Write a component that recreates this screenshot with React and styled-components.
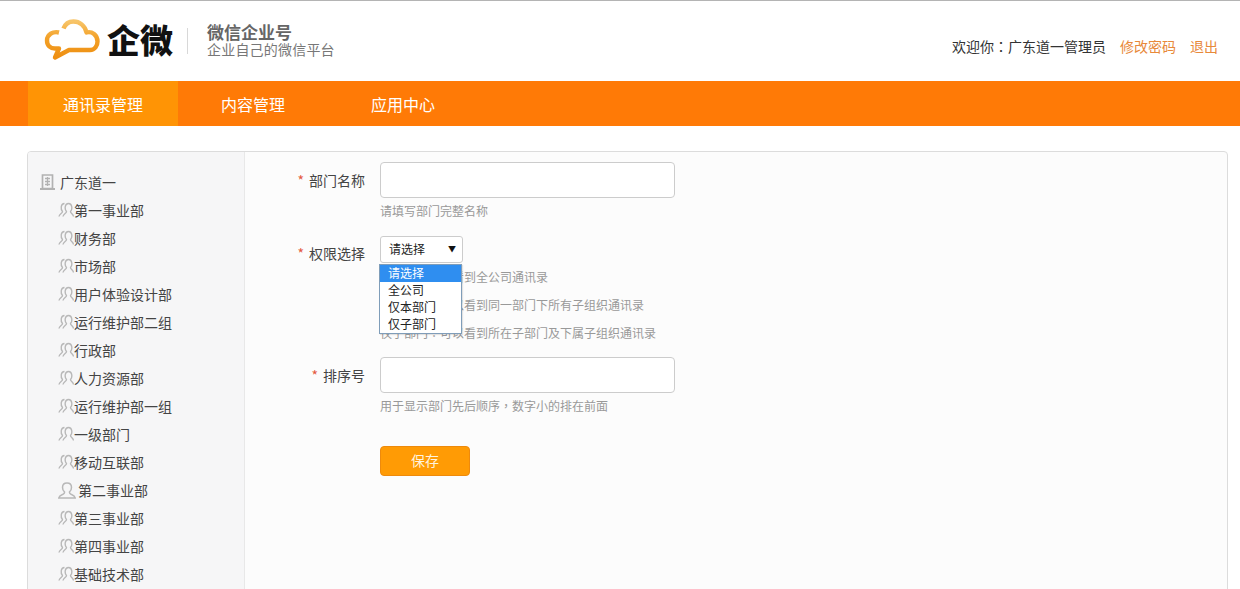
import React from "react";
import styled, { createGlobalStyle } from "styled-components";

const fontStack = `"Noto Sans CJK SC", "Liberation Sans", sans-serif`;

const GlobalStyle = createGlobalStyle`
    html, body {
        margin: 0;
        height: 589px;
        overflow: hidden;
        background: #fff;
        font-family: ${fontStack};
    }
`;

const Header = styled.header`
    height: 80px;
    border-top: 1px solid #b4b4b4;
    display: flex;
    align-items: center;
    justify-content: space-between;
    padding: 0 22px 0 44px;
`;

const Brand = styled.div`
    display: flex;
    align-items: center;
    margin-top: -4px;
`;

const LogoWord = styled.div`
    font-size: 33px;
    font-weight: 900;
    line-height: 40px;
    color: #111;
    margin-left: 7px;
    width: 80px;
`;

const BrandDivider = styled.div`
    width: 1px;
    height: 26px;
    background: #d8d8d8;
    margin: 4px 19px 0 0;
`;

const BrandText = styled.div`
    display: flex;
    flex-direction: column;
    color: #777;
    margin-top: 2px;
`;

const BrandTitle = styled.div`
    font-size: 17px;
    font-weight: 700;
    line-height: 18px;
    color: #666;
`;

const BrandSub = styled.div`
    font-size: 14px;
    line-height: 15px;
    letter-spacing: 0.2px;
    margin-top: 1px;
`;

const UserBar = styled.div`
    display: flex;
    align-items: center;
    gap: 14px;
    font-size: 14px;
    line-height: 20px;
    color: #333;
    margin-top: 10px;
`;

const UserLink = styled.a`
    color: #e8893a;
`;

// traditional-Chinese glyphs centre the full-width colon and comma, as the original does
const Punct = styled.span`
    font-family: "Noto Sans CJK TC", sans-serif;
`;

const Nav = styled.nav`
    height: 45px;
    background: #ff7a06;
    padding-left: 28px;
    display: flex;
`;

const NavItem = styled.a`
    width: 150px;
    display: flex;
    align-items: center;
    justify-content: center;
    font-size: 16px;
    color: #fff;
    background: ${(props) => (props.$active ? "#ff9405" : "transparent")};
`;

const Panel = styled.div`
    margin: 25px 12px 0 27px;
    height: 600px;
    border: 1px solid #dcdcdc;
    border-radius: 4px;
    display: flex;
    overflow: hidden;
    background: #fcfcfc;
`;

const Sidebar = styled.aside`
    width: 216px;
    flex-shrink: 0;
    background: #f6f6f7;
    border-right: 1px solid #e8e8e8;
    padding-top: 16px;
`;

const TreeRow = styled.div`
    height: 28px;
    display: flex;
    align-items: center;
    padding-left: ${(props) => (props.$root ? "12px" : "30px")};
    font-size: 14px;
    color: #444;
`;

const RootLabel = styled.span`
    margin-left: 5px;
`;

const WideLabel = styled.span`
    margin-left: 2px;
`;

const Form = styled.main`
    flex: 1;
    padding-top: 10px;
`;

const Field = styled.div`
    display: flex;
    margin-bottom: ${(props) => props.$gap}px;
`;

const Label = styled.label`
    width: 120px;
    margin-right: 15px;
    text-align: right;
    font-size: 14px;
    line-height: 36px;
    color: #444;
`;

const SelectLabel = styled(Label)`
    line-height: 34px;
`;

const Star = styled.span`
    color: #e4593d;
    margin-right: 5px;
`;

const Control = styled.div`
    position: relative;
    width: 600px;
`;

const TextInput = styled.input`
    display: block;
    box-sizing: border-box;
    width: 295px;
    height: 36px;
    border: 1px solid #ccc;
    border-radius: 4px;
    background: #fff;
    padding: 0 8px;
    outline: none;
`;

const Hint = styled.div`
    font-size: 12px;
    line-height: 28px;
    color: #999;
`;

const FirstHint = styled(Hint)`
    line-height: 26px;
`;

const SelectBox = styled.div`
    box-sizing: border-box;
    width: 83px;
    height: 27px;
    border: 1px solid #ccc;
    border-radius: 3px;
    background: #fff;
    display: flex;
    align-items: center;
    justify-content: space-between;
    padding: 0 6px 2px 8px;
    font-size: 12px;
    color: #222;
`;

const Caret = styled.span`
    font-size: 8px;
    color: #111;
`;

const Dropdown = styled.ul`
    position: absolute;
    left: -1px;
    top: 28px;
    width: 83px;
    box-sizing: border-box;
    margin: 0;
    padding: 0;
    list-style: none;
    background: #fff;
    border: 1px solid #7f9db9;
    box-shadow: 1px 1px 1px rgba(0, 0, 0, 0.1);
`;

const Option = styled.li`
    height: 17px;
    line-height: 16px;
    padding-left: 8px;
    font-size: 12px;
    color: ${(props) => (props.$selected ? "#fff" : "#222")};
    background: ${(props) => (props.$selected ? "#2f8ef0" : "#fff")};
`;

const SaveButton = styled.button`
    display: block;
    width: 90px;
    height: 30px;
    margin-left: 135px;
    border: 1px solid #ee8a0c;
    border-radius: 4px;
    background: #ff9b05;
    color: #fff3df;
    font-family: inherit;
    font-size: 14px;
    padding: 0 0 2px;
`;

const CloudLogo = () => (
    <svg width="56" height="41" viewBox="0 0 56 41" fill="none">
        <defs>
            <linearGradient id="cloudFill" x1="0" y1="0" x2="0" y2="1">
                <stop offset="0" stopColor="#f7c468" />
                <stop offset="0.45" stopColor="#f3a128" />
                <stop offset="1" stopColor="#ee8f12" />
            </linearGradient>
        </defs>
        <path
            d="M15 13.500C9 12 3 15.500 3 21.500C3 26.500 6.500 29.500 11 29.500L15 29.500L11 38.500L25 31L46 31C51 31 53.500 26.500 53.500 22.500C53.500 16 48 12 42.500 13.500C41 6.500 35.500 2.500 29.500 2.500C24.500 2.500 21 5.500 19.500 9.500"
            stroke="url(#cloudFill)"
            strokeWidth="4.4"
            strokeLinejoin="round"
        />
    </svg>
);

const BuildingIcon = () => (
    <svg width="15" height="16" viewBox="0 0 15 16" fill="none" stroke="#b2b2b2" strokeWidth="1.700">
        <path d="M2.500 1h10v13.500h-10z" />
        <path d="M5 4.500h5M5 7.500h5M5 10.500h5M7.500 3v9" strokeWidth="1.300" />
        <path d="M0 15h15" strokeWidth="2" />
    </svg>
);

const GroupIcon = () => (
    <svg width="16" height="16" viewBox="0 0 16 16" fill="none" stroke="#b8b8b8" strokeWidth="1.400">
        <path d="M5 14.500C5.500 11.500 8.500 11.500 8.500 9.500C6.500 7.500 6.500 1.500 10.500 1.500C14.500 1.500 14.500 7.500 12.500 9.500C12.500 11.500 15 11.500 15.500 14.500" />
        <path d="M1 14.500C1.500 11.500 4.500 11.500 4.500 9.500C2.500 7.500 2.500 1.500 6.500 1.500" />
    </svg>
);

const PersonIcon = () => (
    <svg width="18" height="17" viewBox="0 0 18 17" fill="none" stroke="#b8b8b8" strokeWidth="1.500">
        <path d="M9 1C6.200 1 4.500 3 4.500 5.500C4.500 7.500 5.300 9 6.500 9.900C6.700 11 6.300 11.700 5 12.300C3.300 13 1.300 13.500 .8 16H17.200C16.700 13.500 14.700 13 13 12.300C11.700 11.700 11.300 11 11.500 9.900C12.700 9 13.500 7.500 13.500 5.500C13.500 3 11.800 1 9 1Z" />
    </svg>
);

const departments = [
    "第一事业部",
    "财务部",
    "市场部",
    "用户体验设计部",
    "运行维护部二组",
    "行政部",
    "人力资源部",
    "运行维护部一组",
    "一级部门",
    "移动互联部",
    "第二事业部",
    "第三事业部",
    "第四事业部",
    "基础技术部",
];

const App = () => (
    <>
        <GlobalStyle />
        <Header>
            <Brand>
                <CloudLogo />
                <LogoWord>企微</LogoWord>
                <BrandDivider />
                <BrandText>
                    <BrandTitle>微信企业号</BrandTitle>
                    <BrandSub>企业自己的微信平台</BrandSub>
                </BrandText>
            </Brand>
            <UserBar>
                <span>
                    欢迎你<Punct>：</Punct>广东道一管理员
                </span>
                <UserLink>修改密码</UserLink>
                <UserLink>退出</UserLink>
            </UserBar>
        </Header>
        <Nav>
            <NavItem $active>通讯录管理</NavItem>
            <NavItem>内容管理</NavItem>
            <NavItem>应用中心</NavItem>
        </Nav>
        <Panel>
            <Sidebar>
                <TreeRow $root>
                    <BuildingIcon />
                    <RootLabel>广东道一</RootLabel>
                </TreeRow>
                {departments.map((name) =>
                    name === "第二事业部" ? (
                        <TreeRow key={name}>
                            <PersonIcon />
                            <WideLabel>{name}</WideLabel>
                        </TreeRow>
                    ) : (
                        <TreeRow key={name}>
                            <GroupIcon />
                            {name}
                        </TreeRow>
                    )
                )}
            </Sidebar>
            <Form>
                <Field $gap={12}>
                    <Label>
                        <Star>*</Star>部门名称
                    </Label>
                    <Control>
                        <TextInput />
                        <FirstHint>请填写部门完整名称</FirstHint>
                    </Control>
                </Field>
                <Field $gap={10}>
                    <SelectLabel>
                        <Star>*</Star>权限选择
                    </SelectLabel>
                    <Control>
                        <SelectBox>
                            请选择
                            <Caret>▼</Caret>
                        </SelectBox>
                        <Dropdown>
                            <Option $selected>请选择</Option>
                            <Option>全公司</Option>
                            <Option>仅本部门</Option>
                            <Option>仅子部门</Option>
                        </Dropdown>
                        <Hint>
                            全公司<Punct>：</Punct>可以看到全公司通讯录
                        </Hint>
                        <Hint>
                            仅本部门<Punct>：</Punct>可以看到同一部门下所有子组织通讯录
                        </Hint>
                        <Hint>
                            仅子部门<Punct>：</Punct>可以看到所在子部门及下属子组织通讯录
                        </Hint>
                    </Control>
                </Field>
                <Field $gap={27}>
                    <Label>
                        <Star>*</Star>排序号
                    </Label>
                    <Control>
                        <TextInput />
                        <FirstHint>
                            用于显示部门先后顺序<Punct>，</Punct>数字小的排在前面
                        </FirstHint>
                    </Control>
                </Field>
                <SaveButton>保存</SaveButton>
            </Form>
        </Panel>
    </>
);

export default App;
